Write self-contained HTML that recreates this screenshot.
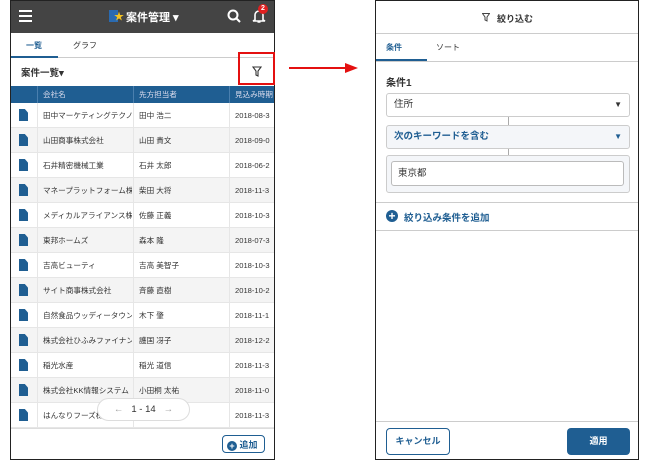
<!DOCTYPE html>
<html><head><meta charset="utf-8"><style>
*{box-sizing:border-box;margin:0;padding:0}
body{width:650px;height:460px;background:#fff;position:relative;overflow:hidden;font-family:"Liberation Sans","Noto Sans CJK JP",sans-serif;color:#333;font-size:9px}
.abs{position:absolute}
#L{left:10px;top:0;width:265px;height:460px;border:1.5px solid #222;overflow:hidden}
.hd{position:absolute;left:0;top:0;width:100%;height:32px;background:#444}
.row{position:absolute;left:0;width:100%;height:25px;border-bottom:1px solid #e6e6e6;font-size:7.6px;color:#333}
.row span{position:absolute;top:0;line-height:25px;white-space:nowrap;overflow:hidden}
.doc{position:absolute;left:8px;top:6px;width:9px;height:12px;background:#1f5e92;clip-path:polygon(0 0,65% 0,100% 30%,100% 100%,0 100%)}
#R{left:375px;top:0;width:264px;height:460px;border:1.5px solid #222;overflow:hidden}
.sel{position:absolute;left:10px;width:244px;height:24px;border:1px solid #ccc;border-radius:3px;font-size:9.5px;padding:0 7px;line-height:22px}
</style></head><body>
<div id="L" class="abs">
 <div class="hd">
  <div class="abs" style="left:8px;top:9px;width:13px;height:2px;background:#fff;box-shadow:0 5px 0 #fff,0 10px 0 #fff"></div>
  <div class="abs" style="left:98px;top:9px;width:9px;height:12px;background:#2a6ab0"></div>
  <div class="abs" style="left:103px;top:7px;color:#f4c320;font-size:10px">★</div>
  <div class="abs" style="left:115px;top:8px;color:#fff;font-size:11px;font-weight:bold">案件管理 ▾</div>
  <svg class="abs" style="left:216px;top:8px" width="14" height="14"><circle cx="6" cy="6" r="4.5" stroke="#fff" stroke-width="2" fill="none"/><path d="M9 9l4 4" stroke="#fff" stroke-width="2"/></svg>
  <svg class="abs" style="left:241px;top:7px" width="14" height="16"><path d="M3 12V7a4 4 0 018 0v5l2 1H1z" stroke="#fff" stroke-width="1.6" fill="none"/><path d="M5.5 14h3" stroke="#fff" stroke-width="1.5"/></svg>
  <div class="abs" style="left:247px;top:3px;width:10px;height:10px;border-radius:50%;background:#e02020;color:#fff;font-size:7px;text-align:center;line-height:10px;font-weight:bold">2</div>
 </div>
 <div class="abs" style="top:32px;left:0;width:100%;height:25px;border-bottom:1px solid #ccc"></div>
 <div class="abs" style="top:39px;left:15px;font-size:8px;color:#1f5e92;font-weight:bold">一覧</div>
 <div class="abs" style="top:39px;left:62px;font-size:8px;color:#333">グラフ</div>
 <div class="abs" style="top:55px;left:0;width:47px;height:2px;background:#1f5e92"></div>
 <div class="abs" style="top:64px;left:10px;font-size:9.5px;font-weight:bold">案件一覧▾</div>
 <svg class="abs" style="left:241px;top:65px" width="10" height="11"><path d="M1 1h8L6 5v5L4 9V5z" stroke="#333" stroke-width="1.1" fill="none"/></svg>
 <div class="abs" style="top:85px;left:0;width:100%;height:17px;background:#1f5e92;color:#dde;font-size:7.6px">
  <span class="abs" style="left:32px;top:3px">会社名</span><span class="abs" style="left:128px;top:3px">先方担当者</span><span class="abs" style="left:224px;top:3px;white-space:nowrap">見込み時期</span>
  <div class="abs" style="left:26px;top:0;width:1px;height:17px;background:#4a7fae"></div><div class="abs" style="left:122px;top:0;width:1px;height:17px;background:#4a7fae"></div><div class="abs" style="left:218px;top:0;width:1px;height:17px;background:#4a7fae"></div>
 </div>
 <div class="abs" style="top:102px;left:0;width:100%;height:325px">
  <div class="abs" style="left:26px;top:0;width:1px;height:325px;background:#e6e6e6;z-index:2"></div>
  <div class="abs" style="left:122px;top:0;width:1px;height:325px;background:#e6e6e6;z-index:2"></div>
  <div class="abs" style="left:218px;top:0;width:1px;height:325px;background:#e6e6e6;z-index:2"></div>
  <div class="row" style="top:0"><i class="doc"></i><span style="left:32px;width:89px">田中マーケティングテクノ</span><span style="left:128px">田中 浩二</span><span style="left:224px">2018-08-3</span></div>
  <div class="row" style="top:25px;background:#f4f4f4"><i class="doc"></i><span style="left:32px;width:89px">山田商事株式会社</span><span style="left:128px">山田 貴文</span><span style="left:224px">2018-09-0</span></div>
  <div class="row" style="top:50px"><i class="doc"></i><span style="left:32px;width:89px">石井精密機械工業</span><span style="left:128px">石井 太郎</span><span style="left:224px">2018-06-2</span></div>
  <div class="row" style="top:75px;background:#f4f4f4"><i class="doc"></i><span style="left:32px;width:89px">マネープラットフォーム株</span><span style="left:128px">柴田 大将</span><span style="left:224px">2018-11-3</span></div>
  <div class="row" style="top:100px"><i class="doc"></i><span style="left:32px;width:89px">メディカルアライアンス株</span><span style="left:128px">佐藤 正義</span><span style="left:224px">2018-10-3</span></div>
  <div class="row" style="top:125px;background:#f4f4f4"><i class="doc"></i><span style="left:32px;width:89px">東邦ホームズ</span><span style="left:128px">森本 隆</span><span style="left:224px">2018-07-3</span></div>
  <div class="row" style="top:150px"><i class="doc"></i><span style="left:32px;width:89px">吉高ビューティ</span><span style="left:128px">吉高 美智子</span><span style="left:224px">2018-10-3</span></div>
  <div class="row" style="top:175px;background:#f4f4f4"><i class="doc"></i><span style="left:32px;width:89px">サイト商事株式会社</span><span style="left:128px">斉藤 直樹</span><span style="left:224px">2018-10-2</span></div>
  <div class="row" style="top:200px"><i class="doc"></i><span style="left:32px;width:89px">自然食品ウッディータウン</span><span style="left:128px">木下 肇</span><span style="left:224px">2018-11-1</span></div>
  <div class="row" style="top:225px;background:#f4f4f4"><i class="doc"></i><span style="left:32px;width:89px">株式会社ひふみファイナン</span><span style="left:128px">護国 冴子</span><span style="left:224px">2018-12-2</span></div>
  <div class="row" style="top:250px"><i class="doc"></i><span style="left:32px;width:89px">稲光水産</span><span style="left:128px">稲光 道信</span><span style="left:224px">2018-11-3</span></div>
  <div class="row" style="top:275px;background:#f4f4f4"><i class="doc"></i><span style="left:32px;width:89px">株式会社KK情報システム</span><span style="left:128px">小田桐 太祐</span><span style="left:224px">2018-11-0</span></div>
  <div class="row" style="top:300px"><i class="doc"></i><span style="left:32px;width:89px">はんなりフーズ株式会社</span><span style="left:128px">東坂本 雅太郎</span><span style="left:224px">2018-11-3</span></div>
 </div>
 <div class="abs" style="left:86px;top:397px;width:93px;height:23px;border-radius:12px;background:#fff;border:1px solid #ddd;z-index:3;font-size:9.5px;color:#333;text-align:center;line-height:21px"><span style="color:#999">←</span>&nbsp;&nbsp; 1 - 14 &nbsp;&nbsp;<span style="color:#999">→</span></div>
 <div class="abs" style="left:0;top:427px;width:100%;height:33px;background:#fff;border-top:1px solid #ddd"></div>
 <div class="abs" style="left:211px;top:434px;width:43px;height:18px;border:1.5px solid #1f5e92;border-radius:4px;font-size:9px;font-weight:bold;color:#1f5e92;padding:2px 0 0 4px"><span style="display:inline-block;width:10px;height:10px;border-radius:50%;background:#1f5e92;color:#fff;font-size:9px;line-height:10px;text-align:center;vertical-align:-1px">+</span> 追加</div>
</div>
<div class="abs" style="left:238px;top:52px;width:37px;height:33px;border:2px solid #e41010"></div>
<div class="abs" style="left:289px;top:67px;width:58px;height:2px;background:#e41010"></div>
<div class="abs" style="left:345px;top:63px;width:0;height:0;border-left:13px solid #e41010;border-top:5px solid transparent;border-bottom:5px solid transparent"></div>
<div id="R" class="abs">
 <div class="abs" style="left:0;top:0;width:100%;height:33px;border-bottom:1px solid #ccc"></div>
 <svg class="abs" style="left:106px;top:12px" width="8" height="9"><path d="M.5.5h7L5 4v4L3 7V4z" stroke="#444" fill="none"/></svg>
 <div class="abs" style="left:121px;top:11px;font-size:9px;font-weight:bold">絞り込む</div>
 <div class="abs" style="left:0;top:60px;width:100%;height:1px;background:#ccc"></div>
 <div class="abs" style="left:10px;top:41px;font-size:8px;color:#1f5e92;font-weight:bold">条件</div>
 <div class="abs" style="left:60px;top:41px;font-size:8px">ソート</div>
 <div class="abs" style="left:0;top:58px;width:51px;height:2px;background:#1f5e92"></div>
 <div class="abs" style="left:10px;top:73px;font-size:10px;font-weight:bold">条件1</div>
 <div class="sel" style="top:92px">住所<span class="abs" style="right:7px;top:0;font-size:8px">▼</span></div>
 <div class="abs" style="left:132px;top:116px;width:1px;height:8px;background:#aaa"></div>
 <div class="sel" style="top:124px;background:#f4f6f9;color:#1f5e92;font-weight:bold">次のキーワードを含む<span class="abs" style="right:7px;top:0;font-size:8px">▼</span></div>
 <div class="abs" style="left:132px;top:148px;width:1px;height:7px;background:#aaa"></div>
 <div class="abs" style="left:10px;top:154px;width:244px;height:38px;border:1px solid #ccc;border-radius:3px;background:#f4f6f9"></div>
 <div class="abs" style="left:15px;top:160px;width:233px;height:25px;border:1px solid #bbb;border-radius:3px;background:#fff;font-size:9.5px;padding:0 6px;line-height:23px">東京都</div>
 <div class="abs" style="left:0;top:201px;width:100%;height:1px;background:#ccc"></div>
 <div class="abs" style="left:10px;top:209px;width:12px;height:12px;border-radius:50%;background:#1f5e92;color:#fff;font-size:12px;line-height:12px;text-align:center;font-weight:bold">+</div>
 <div class="abs" style="left:28px;top:209px;font-size:9.5px;color:#1f5e92;font-weight:bold">絞り込み条件を追加</div>
 <div class="abs" style="left:0;top:229px;width:100%;height:1px;background:#ccc"></div>
 <div class="abs" style="left:0;top:420px;width:100%;height:1px;background:#ccc"></div>
 <div class="abs" style="left:10px;top:427px;width:64px;height:27px;border:1.5px solid #1f5e92;border-radius:4px;color:#1f5e92;font-weight:bold;font-size:9px;text-align:center;line-height:24px">キャンセル</div>
 <div class="abs" style="left:191px;top:427px;width:63px;height:27px;background:#1f5e92;border-radius:4px;color:#fff;font-weight:bold;font-size:9px;text-align:center;line-height:27px">適用</div>
</div>
</body></html>
